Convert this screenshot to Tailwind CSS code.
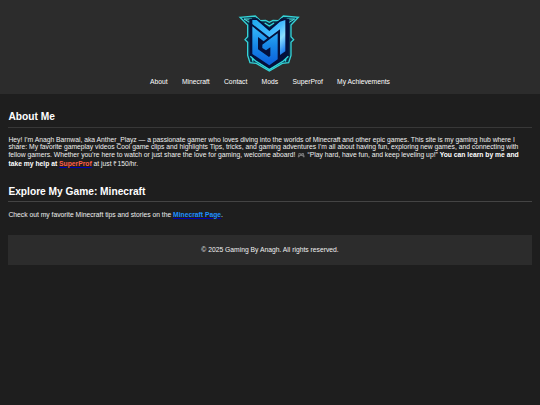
<!DOCTYPE html>
<html lang="en">
<head>
  <meta charset="UTF-8" />
  <meta name="viewport" content="width=device-width, initial-scale=1.0" />
  <title>Gaming By Anagh</title>
  <script src="https://cdn.jsdelivr.net/npm/@tailwindcss/browser@4"></script>
</head>
<body class="bg-[#1e1e1e] text-[#f0f0f0] min-h-screen overflow-hidden font-['Liberation_Sans',Arial,sans-serif] text-[6.75px] leading-[7.8px]">
  <header class="bg-[#2c2c2c] h-[94px] pt-[5px] flex flex-col items-center">
    <svg class="w-[80px] h-[72px] shrink-0" viewBox="0 0 240 216">
      <defs>
        <linearGradient id="letters" x1="0" y1="0" x2="0" y2="1">
          <stop offset="0" stop-color="#35b8fa" />
          <stop offset="0.5" stop-color="#1787e8" />
          <stop offset="1" stop-color="#0b5fdc" />
        </linearGradient>
        <linearGradient id="stem" gradientUnits="userSpaceOnUse" x1="70" y1="46" x2="166" y2="140">
          <stop offset="0" stop-color="#21aaf0" />
          <stop offset="0.5" stop-color="#43baff" />
          <stop offset="0.72" stop-color="#8be0ff" />
          <stop offset="1" stop-color="#1677ee" />
        </linearGradient>
      </defs>
      <!-- frame -->
      <path d="M30 37 L76 33 L91 47 L107 46 L118 52 L129 46 L145 47 L160 33 L205 37 L183 60 L183 95 L191 104 L183 112 L183 151 L176 173 L157 175 L118 198 L79 175 L60 173 L53 151 L53 112 L45 104 L53 95 L53 60 Z" fill="#0b3048" stroke="#35d3d6" stroke-width="4" />
      <path d="M42 42 L66 42 L58 52 Z M194 42 L170 42 L178 52 Z" fill="#1b555c" stroke="#4de4df" stroke-width="3" />
      <path d="M58 42 L82 40 L118 70 L154 40 L178 42 L176 153 L118 192 L60 153 Z" fill="#04103c" />
      <path d="M104 54 L118 63 L132 54 M61 154 L77 168 L118 194 L160 168 L175 154 M67 160 L69 170 M168 160 L166 170" fill="none" stroke="#32d8dc" stroke-width="4" />
      <!-- monogram -->
      <path d="M67 45 L80 45 L118 78 L150 50 L166 45 L166 139 L150 150 L150 73 L118 97 L67 57 Z" fill="url(#stem)" />
      <path d="M67 64 L112 100 L101 109 L84 96 L84 133 L117 156 L121 152 L121 127 L108 136 L97 129 L97 119 L143 85 L143 163 L118 181 L67 147 Z" fill="url(#letters)" />
    </svg>
    <nav class="flex gap-[14.3px] text-white mt-[0.5px]">
      <a href="#">About</a>
      <a href="#">Minecraft</a>
      <a href="#">Contact</a>
      <a href="#">Mods</a>
      <a href="#">SuperProf</a>
      <a href="#">My Achievements</a>
    </nav>
  </header>

  <main class="px-[8.4px] pt-[16px]">
    <section class="h-[75px]">
      <h2 class="text-white text-[10.2px] leading-[13px] font-bold pb-[3.5px] border-b border-[#383838]">About Me</h2>
      <p class="mt-[8px] whitespace-nowrap">
        Hey! I’m Anagh Barnwal, aka Anther_Playz — a passionate gamer who loves diving into the worlds of Minecraft and other epic games. This site is my gaming hub where I<br />
        share: My favorite gameplay videos Cool game clips and highlights Tips, tricks, and gaming adventures I’m all about having fun, exploring new games, and connecting with<br />
        fellow gamers. Whether you’re here to watch or just share the love for gaming, welcome aboard!
        <svg class="inline-block w-[8.4px] h-[6px] align-[-1px]" viewBox="0 0 16 12"><path d="M3 2 H6 L7 3 H9 L10 2 H13 L15 10 L13 11 L10 8 H6 L3 11 L1 10 Z" fill="#757575" /><path d="M3 5 H6 M4.5 3.5 V6.5 M11 4 V6" stroke="#242424" /></svg>
        “Play hard, have fun, and keep leveling up!” <strong class="text-white">You can learn by me and</strong><br />
        <span class="inline-block pt-[1px]"><strong class="text-white">take my help at <a href="#" class="text-[#ff5f49] underline decoration-[#0000b0]">SuperProf</a></strong> at just ₹150/hr.</span>
      </p>
    </section>
    <section class="h-[50px]">
      <h2 class="text-white text-[10.2px] leading-[13px] font-bold pb-[3px] border-b border-[#444]">Explore My Game: Minecraft</h2>
      <p class="mt-[8.5px]">Check out my favorite Minecraft tips and stories on the <a href="#" class="font-bold text-[#1e90ff] underline decoration-[#0000b0]">Minecraft Page</a>.</p>
    </section>
    <footer class="bg-[#2c2c2c] h-[29.5px] flex items-center justify-center">
      <p>© 2025 Gaming By Anagh. All rights reserved.</p>
    </footer>
  </main>
</body>
</html>
